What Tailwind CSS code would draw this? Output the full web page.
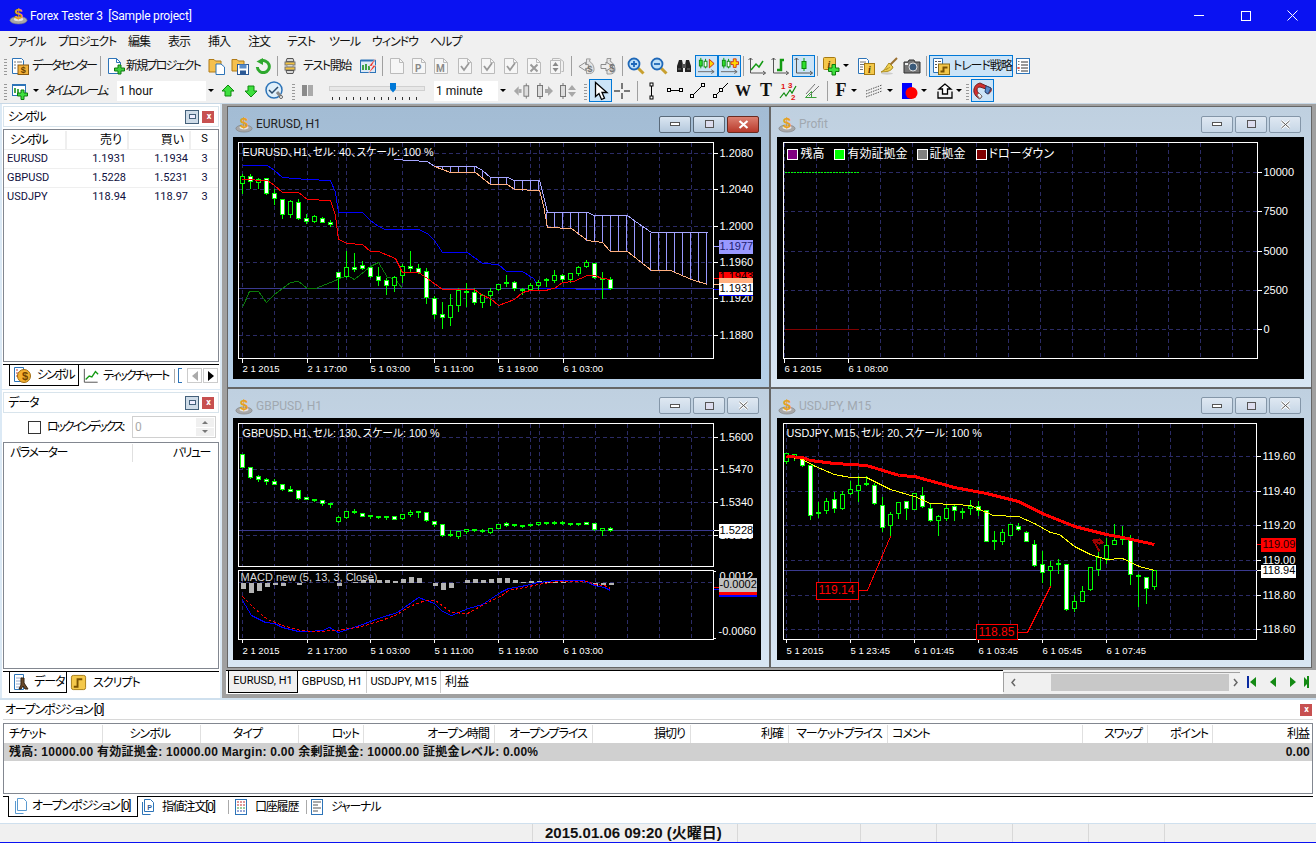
<!DOCTYPE html>
<html lang="ja">
<head>
<meta charset="UTF-8" />
<title>Forex Tester 3 [Sample project]</title>
<script src="https://cdn.jsdelivr.net/npm/@tailwindcss/browser@4"></script>
</head>
<body class="w-[1316px] h-[843px] overflow-hidden bg-[#f0f0f0] text-[12px] text-black font-['Roboto','Noto_Sans_CJK_JP',sans-serif] [font-feature-settings:'palt']">

<!-- icon sheet -->
<svg class="hidden">
  <symbol id="logo" viewBox="0 0 20 20">
    <ellipse cx="10" cy="15" rx="9" ry="4" fill="#a8a8a8" stroke="#777" stroke-width=".6"/>
    <ellipse cx="10" cy="14" rx="5" ry="2" fill="#e6e6e6"/>
    <text x="10" y="14" text-anchor="middle" font-size="16" font-weight="bold" font-family="Liberation Sans" fill="#e8a020">$</text>
  </symbol>
  <symbol id="doc-list" viewBox="0 0 18 18">
    <path d="M1.500 1.500h9l2 2v13h-11z" fill="#fff" stroke="#2d74b8"/>
    <path d="M3 5h2M3 8h2M3 11h2M6 5h5" stroke="#777"/>
    <rect x="7" y="8" width="10.500" height="9.500" fill="#f2b13a" stroke="#8a5a12"/>
    <text x="12.200" y="16" text-anchor="middle" font-size="9" font-weight="bold" font-family="Liberation Sans" fill="#6a3f00">$</text>
  </symbol>
  <symbol id="doc-plus" viewBox="0 0 18 18">
    <path d="M1.500 1.500h8l4 4v11h-12z" fill="#fff" stroke="#2d74b8"/>
    <path d="M9.500 1.500v4h4" fill="none" stroke="#2d74b8"/>
    <path d="M10 8.500h3v3h3.500v3H13v3h-3v-3H6.500v-3H10z" fill="#3fcc3f" stroke="#0e7a0e" transform="translate(1 -.5)"/>
  </symbol>
  <symbol id="folder-doc" viewBox="0 0 18 18">
    <path d="M1 4V2.500h5L7.500 4H13v11H1z" fill="#f6c04e" stroke="#b07a16"/>
    <path d="M8 7h5l3.500 3v7.500H8z" fill="#fff" stroke="#2d74b8"/>
  </symbol>
  <symbol id="folder-save" viewBox="0 0 18 18">
    <path d="M1 4V2.500h5L7.500 4H13v10H1z" fill="#f6c04e" stroke="#b07a16"/>
    <rect x="6.500" y="7.500" width="11" height="10" fill="#fff" stroke="#2d5a96"/>
    <rect x="8.500" y="7.500" width="7" height="4" fill="#5a8cc8"/>
    <rect x="9" y="13.500" width="6" height="4" fill="#2d5a96"/>
  </symbol>
  <symbol id="refresh" viewBox="0 0 16 16">
    <path d="M5.500 3.300A6 6 0 1 1 2.300 9" fill="none" stroke="#2ea82e" stroke-width="3"/>
    <path d="M8 0v7L1.500 3.500z" fill="#2ea82e"/>
  </symbol>
  <symbol id="coil" viewBox="0 0 12 18">
    <path d="M3 1.500h6l1 3H2z" fill="#d8d8d8" stroke="#555"/>
    <rect x="1" y="5" width="10" height="3" fill="#f0c040" stroke="#777"/>
    <rect x="3" y="8" width="6" height="2" fill="#fff" stroke="#777" stroke-width=".6"/>
    <rect x="1" y="10" width="10" height="3" fill="#f0c040" stroke="#777"/>
    <path d="M2 13.500h8l-1 3H3z" fill="#d8d8d8" stroke="#555"/>
  </symbol>
  <symbol id="chart-bolt" viewBox="0 0 18 18">
    <rect x="1.500" y="3.500" width="15" height="12" fill="#dce9f6" stroke="#2d74b8"/>
    <path d="M1.500 3.500h15" stroke="#2d74b8" stroke-width="2"/>
    <path d="M4 8v5M7 7v6M10 9v4" stroke="#0b8a0b" stroke-width="1.500"/>
    <path d="M17 1 10 9h4L9 17l8-8.500h-4z" fill="#e8261c" stroke="#fff" stroke-width=".4"/>
  </symbol>
  <symbol id="doc-off" viewBox="0 0 16 18">
    <path d="M1.500 1.500h9l4 4v11h-13z" fill="#f6f6f6" stroke="#bbb"/>
    <path d="M10.500 1.500v4h4" fill="none" stroke="#bbb"/>
  </symbol>
  <symbol id="doc-check" viewBox="0 0 16 18">
    <path d="M1.500 1.500h9l4 4v11h-13z" fill="#f6f6f6" stroke="#bbb"/>
    <path d="M10.500 1.500v4h4" fill="none" stroke="#bbb"/>
    <path d="M4 9l3 4 5-7" fill="none" stroke="#9a9a9a" stroke-width="1.800"/>
  </symbol>
  <symbol id="doc-x" viewBox="0 0 16 18">
    <path d="M1.500 1.500h9l4 4v11h-13z" fill="#f6f6f6" stroke="#bbb"/>
    <path d="M10.500 1.500v4h4" fill="none" stroke="#bbb"/>
    <path d="M4.500 7.500l7 7m0-7l-7 7" stroke="#9a9a9a" stroke-width="2"/>
  </symbol>
  <symbol id="doc-updown" viewBox="0 0 16 18">
    <path d="M3.500 3.500V1.500h7l4 3v10h-2" fill="none" stroke="#bbb"/>
    <path d="M1.500 3.500h10v13h-10z" fill="#f6f6f6" stroke="#bbb"/>
    <path d="M6.500 5 9.500 9h-6zM6.500 15l3-4h-6z" fill="#8a8a8a"/>
  </symbol>
  <symbol id="money-l" viewBox="0 0 18 18">
    <path d="M9 1.500h4l-1 2.500c3 1.500 5 5 5 8.500 0 3-2 4.500-5 4.500H9z" fill="#e4e4e4" stroke="#9a9a9a"/>
    <path d="M8 5 1 9.500 8 14v-2.500h3v-4H8z" fill="#eee" stroke="#8a8a8a"/>
    <text x="12.500" y="15" text-anchor="middle" font-size="10" font-weight="bold" font-family="Liberation Sans" fill="#777">$</text>
  </symbol>
  <symbol id="money-r" viewBox="0 0 18 18">
    <path d="M7 1.500h4l-1 2.500c3 1.500 5 5 5 8.500 0 3-2 4.500-5 4.500H7z" fill="#e4e4e4" stroke="#9a9a9a"/>
    <path d="M6 5l7 4.500L6 14v-2.500H1v-4h5z" fill="#eee" stroke="#8a8a8a"/>
    <text x="12" y="15" text-anchor="middle" font-size="10" font-weight="bold" font-family="Liberation Sans" fill="#777">$</text>
  </symbol>
  <symbol id="zoom-in" viewBox="0 0 18 18">
    <path d="M11 11l5.500 5.500" stroke="#c8a030" stroke-width="3"/>
    <circle cx="7" cy="7" r="5.500" fill="#bfe0f8" stroke="#1f68b8" stroke-width="1.800"/>
    <path d="M4 7h6M7 4v6" stroke="#1f68b8" stroke-width="1.800"/>
  </symbol>
  <symbol id="zoom-out" viewBox="0 0 18 18">
    <path d="M11 11l5.500 5.500" stroke="#c8a030" stroke-width="3"/>
    <circle cx="7" cy="7" r="5.500" fill="#bfe0f8" stroke="#1f68b8" stroke-width="1.800"/>
    <path d="M4 7h6" stroke="#1f68b8" stroke-width="1.800"/>
  </symbol>
  <symbol id="binoc" viewBox="0 0 16 16">
    <path d="M3 2h3l1 5v7H1V8zM13 2h-3L9 7v7h6V8z" fill="#222"/>
    <rect x="6" y="6" width="4" height="4" fill="#555"/>
    <path d="M2 11h3M11 11h3" stroke="#777"/>
  </symbol>
  <symbol id="cand-play" viewBox="0 0 20 20">
    <path d="M1 16.500h17" stroke="#666"/><path d="M15 14.500l3 2-3 2" fill="none" stroke="#666"/>
    <path d="M4 2v11M9 3v10" stroke="#0a9a0a"/>
    <rect x="2.500" y="4.500" width="3" height="6" fill="#2ee02e" stroke="#0a8a0a"/>
    <rect x="7.500" y="5.500" width="3" height="6" fill="#fff" stroke="#0a8a0a"/>
    <path d="M13 3.500l5 4.500-5 4.500z" fill="#ffd800" stroke="#d02010"/>
  </symbol>
  <symbol id="cand-plus" viewBox="0 0 20 20">
    <path d="M1 16.500h17" stroke="#666"/><path d="M15 14.500l3 2-3 2" fill="none" stroke="#666"/>
    <path d="M4 2v11M9 3v10" stroke="#0a9a0a"/>
    <rect x="2.500" y="4.500" width="3" height="6" fill="#2ee02e" stroke="#0a8a0a"/>
    <rect x="7.500" y="5.500" width="3" height="6" fill="#fff" stroke="#0a8a0a"/>
    <path d="M14 3h3v3h2.500v3H17v3h-3V9h-2.500V6H14z" fill="#ffd800" stroke="#d02010" stroke-width=".9"/>
  </symbol>
  <symbol id="ch-line" viewBox="0 0 18 18">
    <path d="M2.500 1v15h15" fill="none" stroke="#555"/><path d="M.5 3l2-2 2 2M15 14l2.500 2-2.500 2" fill="none" stroke="#555"/>
    <path d="M3 13 8 7l3 3 4-6" fill="none" stroke="#139a13" stroke-width="1.500"/>
  </symbol>
  <symbol id="ch-bar" viewBox="0 0 18 18">
    <path d="M2.500 1v15h15" fill="none" stroke="#555"/><path d="M.5 3l2-2 2 2M15 14l2.500 2-2.500 2" fill="none" stroke="#555"/>
    <path d="M6 13h4V3h3" fill="none" stroke="#139a13" stroke-width="2.500"/>
  </symbol>
  <symbol id="ch-cand" viewBox="0 0 20 18">
    <path d="M2.500 1v15h16" fill="none" stroke="#555"/><path d="M.5 3l2-2 2 2M16 14l2.500 2-2.500 2" fill="none" stroke="#555"/>
    <path d="M10 1v13" stroke="#0a9a0a"/><rect x="8" y="4.500" width="4" height="7" fill="#2ee02e" stroke="#0a8a0a"/>
  </symbol>
  <symbol id="info-plus" viewBox="0 0 19 20">
    <rect x="1.500" y="1.500" width="12" height="12" rx="1" fill="#f4c84a" stroke="#a67a12"/>
    <text x="7" y="11.500" text-anchor="middle" font-size="10" font-style="italic" font-weight="bold" font-family="Liberation Serif" fill="#5a3c00">i</text>
    <path d="M10 8.500h3.500v3.500H17v3.500h-3.500V19H10v-3.500H6.500V12H10z" fill="#3fe03f" stroke="#0e7a0e"/>
  </symbol>
  <symbol id="info-doc" viewBox="0 0 18 18">
    <path d="M1.500 1.500h8l2 2v13h-10z" fill="#fff" stroke="#2d74b8"/>
    <path d="M3 5h6M3 7.500h4M3 10h3M3 12.500h3" stroke="#777"/>
    <rect x="7.500" y="6.500" width="10" height="11" fill="#f4c84a" stroke="#a67a12"/>
    <text x="12.500" y="16" text-anchor="middle" font-size="10" font-style="italic" font-weight="bold" font-family="Liberation Serif" fill="#5a3c00">i</text>
  </symbol>
  <symbol id="broom" viewBox="0 0 18 18">
    <path d="M17 1 9 9" stroke="#9a7030" stroke-width="2"/>
    <path d="M9 6l4 4c-1 3-4 5-12 5 3-1 5-5 8-9z" fill="#f0d050" stroke="#a88a20"/>
    <path d="M3 14l5-3M6 13l4-3" stroke="#a88a20" stroke-width=".7"/>
    <ellipse cx="7" cy="16.500" rx="6" ry="1.200" fill="#ccc"/>
  </symbol>
  <symbol id="camera" viewBox="0 0 18 18">
    <path d="M1 5h4l1-2h5l1 2h5v11H1z" fill="#777" stroke="#333"/>
    <circle cx="10" cy="10" r="4" fill="#3a5a7a" stroke="#ddd"/><rect x="2" y="6" width="3" height="2" fill="#eee"/>
  </symbol>
  <symbol id="strat" viewBox="0 0 18 18">
    <path d="M1.500 1.500h9v14h-9z" fill="#fff" stroke="#2d74b8"/>
    <path d="M3 4.500h2M3 7.500h2M3 10.500h2M6 4.500h3" stroke="#555"/>
    <rect x="6.500" y="7" width="11" height="10.500" fill="#f4c84a" stroke="#8a6a12"/>
    <path d="M8.500 14.500h3v-4h4" fill="none" stroke="#7a5200" stroke-width="2"/>
  </symbol>
  <symbol id="list-x" viewBox="0 0 14 16">
    <rect x=".5" y=".5" width="13" height="15" fill="#fff" stroke="#2d74b8"/>
    <path d="M5 4h7M5 7h7M5 10h7M5 13h7" stroke="#333"/><path d="M2 3.500h1.500M2 6.500h1.500M2 12.500h1.500" stroke="#777"/>
    <path d="M1.500 9l2 2m0-2l-2 2" stroke="#d02010"/>
  </symbol>
  <symbol id="chart-plus" viewBox="0 0 18 18">
    <rect x="1.500" y="2.500" width="13" height="11" fill="#fff" stroke="#2d74b8"/>
    <path d="M1.500 3h13" stroke="#2d74b8" stroke-width="2"/>
    <path d="M4 6v5M7 7v4" stroke="#0b8a0b" stroke-width="1.500"/>
    <path d="M10 8h3v3h3.500v3H13v3.500h-3V14H6.500v-3H10z" fill="#3fe03f" stroke="#0e7a0e"/>
  </symbol>
  <symbol id="clock" viewBox="0 0 20 20">
    <circle cx="9" cy="9" r="8" fill="#dfeffa" stroke="#2d74b8" stroke-width="1.500"/>
    <path d="M4 9l3 3 6-6" fill="none" stroke="#2a4a6a" stroke-width="1.500"/>
    <path d="M12 11l5 6" stroke="#8a8a8a" stroke-width="3"/><circle cx="16" cy="16" r="1.500" fill="#fff" stroke="#666"/>
  </symbol>
  <symbol id="c-left" viewBox="0 0 20 18">
    <path d="M1 9l5-5v10z" fill="#a8a8a8"/><rect x="6" y="7" width="3" height="4" fill="#a8a8a8"/>
    <path d="M14 1v16" stroke="#777"/><rect x="11.500" y="3.500" width="5" height="11" fill="#ddd" stroke="#777"/>
  </symbol>
  <symbol id="c-right" viewBox="0 0 18 18">
    <path d="M4 1v16" stroke="#777"/><rect x="1.500" y="3.500" width="5" height="11" fill="#ddd" stroke="#777"/>
    <path d="M17 9l-5-5v10z" fill="#a8a8a8"/><rect x="9" y="7" width="3" height="4" fill="#a8a8a8"/>
  </symbol>
  <symbol id="c-ud" viewBox="0 0 18 18">
    <path d="M4 1v16" stroke="#777"/><rect x="1.500" y="3.500" width="5" height="11" fill="#ddd" stroke="#777"/>
    <path d="M13 3l4 5H9zM13 15l4-5H9z" fill="#a8a8a8"/>
  </symbol>
  <symbol id="cursor" viewBox="0 0 18 20">
    <path d="M3.500 1.500v14l3.500-3 2.500 6 3-1.300-2.500-5.700H15z" fill="#fff" stroke="#000" stroke-width="1.300"/>
  </symbol>
  <symbol id="fib" viewBox="0 0 18 18">
    <path d="M1 16l4-5 2 3 4-6 2 3 4-7" fill="none" stroke="#0b8a0b" stroke-width="1.200"/>
    <text x="2" y="7" font-size="8" font-weight="bold" font-family="Liberation Sans" fill="#e01010">1</text>
    <text x="9" y="6" font-size="8" font-weight="bold" font-family="Liberation Sans" fill="#e01010">3</text>
    <text x="12" y="17.500" font-size="8" font-weight="bold" font-family="Liberation Sans" fill="#e01010">2</text>
  </symbol>
  <symbol id="parallel" viewBox="0 0 16 16">
    <path d="M1.500 14.500h11M1.500 14.500l6-6v6" fill="none" stroke="#3aa03a"/>
    <path d="M2 11l9-10M5 13l10-10" stroke="#777"/>
  </symbol>
  <symbol id="lines" viewBox="0 0 18 14">
    <path d="M1 7 17 1M1 10 17 4M1 13 17 7" stroke="#555" stroke-dasharray="1.500 1"/>
  </symbol>
  <symbol id="color" viewBox="0 0 16 16">
    <rect width="10" height="16" fill="#0000ff"/><circle cx="9.500" cy="10" r="6" fill="#ff0000"/>
  </symbol>
  <symbol id="export" viewBox="0 0 18 16">
    <path d="M9 1 3 6h3.500v5h5V6H15z" fill="#fff" stroke="#000" stroke-width="1.300"/>
    <path d="M2 8.500v6.500h14V8.500" fill="none" stroke="#000" stroke-width="1.300"/>
  </symbol>
  <symbol id="magnet" viewBox="0 0 20 20">
    <path d="M7 2 18 7c1 3-1 5-3 6L12 11c1-1 2-2 1-3L7 6c-2 0-3 1-3 3s3 5 5 6l-2 3C3 16 0 12 1 8s3-5 6-6z" fill="#d03030" stroke="#702020"/>
    <path d="M13 5l5 2-3 6-3-2z" fill="#5a8ccc" stroke="#274a7a"/>
    <path d="M4 14l3 4 2-3-3-3z" fill="#eee" stroke="#777"/>
  </symbol>
  <symbol id="tick" viewBox="0 0 18 18">
    <path d="M1.500 1v15h15" fill="none" stroke="#444"/><path d="M3 13l4-4 3 1 4-6 3 3" fill="none" stroke="#139a13" stroke-width="1.500"/>
  </symbol>
  <symbol id="coins" viewBox="0 0 18 18">
    <path d="M1.500 1.500h9v14h-9z" fill="#fff" stroke="#2d74b8"/>
    <path d="M3 4h2M3 7h2M3 10h2" stroke="#c04040"/>
    <circle cx="11" cy="10" r="6.500" fill="#f4b030" stroke="#a06a10"/>
    <text x="11" y="14" text-anchor="middle" font-size="11" font-weight="bold" font-family="Liberation Sans" fill="#704400">$</text>
  </symbol>
  <symbol id="data-i" viewBox="0 0 18 18">
    <path d="M1.500 1.500h9v15h-9z" fill="#fff" stroke="#2d74b8"/>
    <path d="M3 5h6M3 8h6M3 11h6M3 14h6" stroke="#9ac"/>
    <path d="M8 5h3v5l4 6h-3l-2-3-2 3H6l2-4z" fill="#6a4a2a" stroke="#321"/>
  </symbol>
  <symbol id="script-i" viewBox="0 0 18 18">
    <rect x="1.500" y="1.500" width="15" height="15" rx="2" fill="#f4c84a" stroke="#a67a12"/>
    <path d="M4 13.500h4v-8h5" fill="none" stroke="#7a5200" stroke-width="2"/>
  </symbol>
  <symbol id="doc2" viewBox="0 0 14 18">
    <path d="M3.500 1.500h6l3 3v9h-9z" fill="#fff" stroke="#5a9ad0"/>
    <path d="M1.500 4v12.500h8" fill="none" stroke="#5a9ad0"/>
  </symbol>
  <symbol id="doc-p" viewBox="0 0 14 18">
    <path d="M3.500 1.500h6l3 3v9h-9z" fill="#fff" stroke="#2d74b8"/>
    <path d="M1.500 4v12.500h8" fill="none" stroke="#2d74b8"/>
    <text x="8" y="11.500" text-anchor="middle" font-size="7" font-weight="bold" font-family="Liberation Sans" fill="#2d5a96">P</text>
  </symbol>
  <symbol id="grid-i" viewBox="0 0 14 18">
    <rect x="1.500" y="1.500" width="11" height="15" fill="#fff" stroke="#2d74b8"/>
    <path d="M3 4h8M3 7h8" stroke="#c03030"/><path d="M3 10h8" stroke="#3a9a3a"/><path d="M3 13h8" stroke="#3050b0"/>
    <path d="M5.500 3v11M8.500 3v11" stroke="#fff"/>
  </symbol>
  <symbol id="journal-i" viewBox="0 0 14 18">
    <rect x="1.500" y="1.500" width="11" height="15" fill="#fff" stroke="#2d74b8"/>
    <path d="M3 4h8M3 7h5M3 10h8M3 13h5" stroke="#555"/>
  </symbol>
</svg>

<!-- タイトルバー -->
<div class="h-[31px] bg-[#0a12f2] flex items-center text-white">
  <svg class="w-[19px] h-[19px] ml-[9px]"><use href="#logo"/></svg>
  <span class="ml-[2px] whitespace-pre tracking-[-.2px]">Forex Tester 3  [Sample project]</span>
  <div class="ml-auto flex h-full">
    <div class="w-[47px] flex items-center justify-center"><div class="w-[10px] h-px bg-white"></div></div>
    <div class="w-[47px] flex items-center justify-center"><div class="w-[10px] h-[10px] border border-white"></div></div>
    <div class="w-[47px] flex items-center justify-center">
      <svg class="w-[11px] h-[11px]" viewBox="0 0 11 11"><path d="M.5.5l10 10m0-10l-10 10" stroke="#fff"/></svg>
    </div>
  </div>
</div>

<!-- メニュー -->
<div class="h-[22px] flex items-center pl-[8px] text-[#111] whitespace-nowrap tracking-[-1px]">
  <span class="w-[50px]">ファイル</span><span class="w-[70px]">プロジェクト</span><span class="w-[40px]">編集</span><span class="w-[40px]">表示</span><span class="w-[40px]">挿入</span><span class="w-[39px]">注文</span><span class="w-[42px]">テスト</span><span class="w-[43px]">ツール</span><span class="w-[58px]">ウィンドウ</span><span>ヘルプ</span>
</div>

<!-- ツールバー1 -->
<div class="h-[25px] flex items-center pl-[4px] text-[#111]">
  <div class="w-[3px] h-[18px] bg-[repeating-linear-gradient(0deg,#999_0,#999_1px,transparent_1px,transparent_3px)]"></div>
  <svg class="w-[18px] h-[18px] ml-[4px]"><use href="#doc-list"/></svg>
  <span class="ml-[3px] w-[62px] whitespace-nowrap tracking-[-2px]">データセンター</span>
  <div class="ml-[6px] w-px h-[20px] bg-[#a0a0a0]"></div>
  <svg class="w-[18px] h-[18px] ml-[6px]"><use href="#doc-plus"/></svg>
  <span class="ml-[1px] w-[76px] whitespace-nowrap tracking-[-1.8px]">新規プロジェクト</span>
  <svg class="w-[18px] h-[18px] ml-[6px]"><use href="#folder-doc"/></svg>
  <svg class="w-[18px] h-[18px] ml-[5px]"><use href="#folder-save"/></svg>
  <svg class="w-[16px] h-[16px] ml-[6px]"><use href="#refresh"/></svg>
  <div class="ml-[6px] w-px h-[20px] bg-[#a0a0a0]"></div>
  <svg class="w-[12px] h-[18px] ml-[6px]"><use href="#coil"/></svg>
  <span class="ml-[7px] w-[49px] whitespace-nowrap tracking-[-1.4px]">テスト開始</span>
  <svg class="w-[18px] h-[18px] ml-[7px]"><use href="#chart-bolt"/></svg>
  <div class="ml-[5px] w-px h-[20px] bg-[#a0a0a0]"></div>
  <svg class="w-[16px] h-[18px] ml-[6px]"><use href="#doc-off"/></svg>
  <div class="relative ml-[6px] w-[16px] h-[18px]"><svg class="w-[16px] h-[18px]"><use href="#doc-off"/></svg><span class="absolute left-[4px] top-[4px] text-[10px] font-bold text-[#8a8a8a]">P</span></div>
  <div class="relative ml-[6px] w-[16px] h-[18px]"><svg class="w-[16px] h-[18px]"><use href="#doc-off"/></svg><span class="absolute left-[3px] top-[4px] text-[10px] font-bold text-[#8a8a8a]">M</span></div>
  <svg class="w-[16px] h-[18px] ml-[8px]"><use href="#doc-check"/></svg>
  <svg class="w-[16px] h-[18px] ml-[7px]"><use href="#doc-check"/></svg>
  <svg class="w-[16px] h-[18px] ml-[7px]"><use href="#doc-check"/></svg>
  <svg class="w-[16px] h-[18px] ml-[7px]"><use href="#doc-x"/></svg>
  <svg class="w-[16px] h-[18px] ml-[7px]"><use href="#doc-updown"/></svg>
  <div class="ml-[6px] w-px h-[20px] bg-[#a0a0a0]"></div>
  <svg class="w-[17px] h-[18px] ml-[6px]"><use href="#money-l"/></svg>
  <svg class="w-[18px] h-[18px] ml-[5px]"><use href="#money-r"/></svg>
  <div class="ml-[4px] w-px h-[20px] bg-[#a0a0a0]"></div>
  <svg class="w-[18px] h-[18px] ml-[4px]"><use href="#zoom-in"/></svg>
  <svg class="w-[18px] h-[18px] ml-[5px]"><use href="#zoom-out"/></svg>
  <svg class="w-[16px] h-[16px] ml-[8px]"><use href="#binoc"/></svg>
  <div class="ml-[3px] w-[23px] h-[22px] flex items-center justify-center border border-[#0078d7] bg-[#cce4f7]"><svg class="w-[19px] h-[19px]"><use href="#cand-play"/></svg></div>
  <div class="w-[23px] h-[22px] flex items-center justify-center border border-[#0078d7] bg-[#cce4f7]"><svg class="w-[19px] h-[19px]"><use href="#cand-plus"/></svg></div>
  <div class="ml-[2px] w-px h-[20px] bg-[#a0a0a0]"></div>
  <svg class="w-[18px] h-[18px] ml-[4px]"><use href="#ch-line"/></svg>
  <svg class="w-[18px] h-[18px] ml-[5px]"><use href="#ch-bar"/></svg>
  <div class="ml-[3px] w-[23px] h-[22px] flex items-center justify-center border border-[#0078d7] bg-[#cce4f7]"><svg class="w-[20px] h-[18px]"><use href="#ch-cand"/></svg></div>
  <div class="ml-[2px] w-px h-[20px] bg-[#a0a0a0]"></div>
  <svg class="w-[19px] h-[20px] ml-[4px]"><use href="#info-plus"/></svg>
  <div class="ml-[2px] border-x-[3px] border-t-[3px] border-x-transparent border-t-black"></div>
  <svg class="w-[18px] h-[18px] ml-[8px]"><use href="#info-doc"/></svg>
  <svg class="w-[18px] h-[18px] ml-[5px]"><use href="#broom"/></svg>
  <svg class="w-[18px] h-[18px] ml-[5px]"><use href="#camera"/></svg>
  <div class="ml-[5px] w-px h-[20px] bg-[#a0a0a0]"></div>
  <div class="ml-[2px] w-[84px] h-[22px] flex items-center border border-[#0078d7] bg-[#cce4f7]"><svg class="w-[18px] h-[18px] ml-[2px]"><use href="#strat"/></svg><span class="ml-[3px] whitespace-nowrap tracking-[-1.1px]">トレード戦略</span></div>
  <svg class="w-[14px] h-[16px] ml-[3px]"><use href="#list-x"/></svg>
</div>

<!-- ツールバー2 -->
<div class="h-[25px] flex items-center pl-[4px] text-[#111]">
  <div class="w-[3px] h-[18px] bg-[repeating-linear-gradient(0deg,#999_0,#999_1px,transparent_1px,transparent_3px)]"></div>
  <svg class="w-[18px] h-[18px] ml-[4px]"><use href="#chart-plus"/></svg>
  <div class="ml-[4px] border-x-[3px] border-t-[3px] border-x-transparent border-t-black"></div>
  <span class="ml-[6px] w-[65px] whitespace-nowrap tracking-[-1.9px]">タイムフレーム:</span>
  <div class="ml-[7px] w-[99px] h-[20px] bg-white flex items-center pl-[2px]">1 hour
    <div class="ml-auto w-[10px] h-full bg-[#f0f0f0] flex items-center justify-center"><div class="border-x-[3px] border-t-[3px] border-x-transparent border-t-black"></div></div>
  </div>
  <svg class="w-[14px] h-[14px] ml-[5px]" viewBox="0 0 14 14"><path d="M7 1l6 6H10v5H4V7H1z" fill="#3ee03e" stroke="#0e8a0e"/></svg>
  <svg class="w-[14px] h-[14px] ml-[9px]" viewBox="0 0 14 14"><path d="M7 13 1 7h3V2h6v5h3z" fill="#3ee03e" stroke="#0e8a0e"/></svg>
  <svg class="w-[20px] h-[20px] ml-[7px]"><use href="#clock"/></svg>
  <div class="ml-[7px] w-[3px] h-[18px] bg-[repeating-linear-gradient(0deg,#999_0,#999_1px,transparent_1px,transparent_3px)]"></div>
  <div class="ml-[7px] w-[11px] h-[11px] flex gap-[1px]"><div class="w-[5px] bg-[#8a8a8a]"></div><div class="w-[5px] bg-[#aaa]"></div></div>
  <div class="relative ml-[16px] w-[96px] h-[20px]">
    <div class="absolute left-0 right-0 top-[5px] h-[5px] bg-[#e7e7e7] border border-[#d0d0d0]"></div>
    <div class="absolute left-[61px] top-[2px] w-[6px] h-[10px] bg-[#0078d7] [clip-path:polygon(0_0,100%_0,100%_65%,50%_100%,0_65%)]"></div>
    <div class="absolute left-[3px] right-[3px] top-[16px] h-[3px] bg-[repeating-linear-gradient(90deg,#333_0,#333_1px,transparent_1px,transparent_7px)]"></div>
  </div>
  <div class="ml-[9px] w-[74px] h-[20px] bg-white flex items-center pl-[2px]">1 minute
    <div class="ml-auto w-[10px] h-full bg-[#f0f0f0] flex items-center justify-center"><div class="border-x-[3px] border-t-[3px] border-x-transparent border-t-black"></div></div>
  </div>
  <svg class="w-[19px] h-[18px] ml-[5px]"><use href="#c-left"/></svg>
  <svg class="w-[18px] h-[18px] ml-[4px]"><use href="#c-right"/></svg>
  <svg class="w-[18px] h-[18px] ml-[5px]"><use href="#c-ud"/></svg>
  <div class="ml-[7px] w-[3px] h-[18px] bg-[repeating-linear-gradient(0deg,#999_0,#999_1px,transparent_1px,transparent_3px)]"></div>
  <div class="ml-[2px] w-[23px] h-[23px] flex items-center justify-center border border-[#0078d7] bg-[#cce4f7]"><svg class="w-[18px] h-[20px]"><use href="#cursor"/></svg></div>
  <svg class="w-[16px] h-[16px] ml-[2px]" viewBox="0 0 16 16"><path d="M0 8h6M10 8h6M8 0v6M8 10v6" stroke="#000"/></svg>
  <div class="ml-[7px] w-px h-[20px] bg-[#a0a0a0]"></div>
  <svg class="w-[5px] h-[18px] ml-[11px]" viewBox="0 0 5 18"><path d="M2.500 3v12" stroke="#000"/><rect x="1" y="1" width="3" height="3" fill="#fff" stroke="#000"/><rect x="1" y="14" width="3" height="3" fill="#fff" stroke="#000"/></svg>
  <svg class="w-[16px] h-[5px] ml-[13px]" viewBox="0 0 16 5"><path d="M3 2.500h10" stroke="#000"/><rect x=".5" y=".5" width="3" height="3" fill="#fff" stroke="#000"/><rect x="12.500" y=".5" width="3" height="3" fill="#fff" stroke="#000"/></svg>
  <svg class="w-[15px] h-[15px] ml-[7px]" viewBox="0 0 15 15"><path d="M2 13 13 2" stroke="#000"/><rect x=".5" y="11.500" width="3" height="3" fill="#fff" stroke="#000"/><rect x="11.500" y=".5" width="3" height="3" fill="#fff" stroke="#000"/></svg>
  <svg class="w-[15px] h-[15px] ml-[8px]" viewBox="0 0 15 15"><path d="M2 13 15 0" stroke="#000"/><rect x=".5" y="11.500" width="3" height="3" fill="#fff" stroke="#000"/><rect x="6.500" y="5.500" width="3" height="3" fill="#fff" stroke="#000"/></svg>
  <span class="ml-[7px] w-[16px] text-center text-[16px] font-bold font-['Liberation_Serif']">W</span>
  <span class="ml-[9px] w-[12px] text-center text-[18px] font-bold font-['Liberation_Serif']">T</span>
  <svg class="w-[18px] h-[18px] ml-[7px]"><use href="#fib"/></svg>
  <svg class="w-[16px] h-[16px] ml-[7px]"><use href="#parallel"/></svg>
  <div class="ml-[7px] w-px h-[20px] bg-[#a0a0a0]"></div>
  <span class="ml-[7px] w-[12px] text-center text-[18px] font-bold font-['Liberation_Serif']">F</span>
  <div class="ml-[4px] border-x-[3px] border-t-[3px] border-x-transparent border-t-black"></div>
  <svg class="w-[18px] h-[14px] ml-[8px]"><use href="#lines"/></svg>
  <div class="ml-[4px] border-x-[3px] border-t-[3px] border-x-transparent border-t-black"></div>
  <svg class="w-[16px] h-[16px] ml-[9px]"><use href="#color"/></svg>
  <div class="ml-[3px] border-x-[3px] border-t-[3px] border-x-transparent border-t-black"></div>
  <svg class="w-[18px] h-[16px] ml-[9px]"><use href="#export"/></svg>
  <div class="ml-[2px] border-x-[3px] border-t-[3px] border-x-transparent border-t-black"></div>
  <div class="ml-[4px] w-[3px] h-[18px] bg-[repeating-linear-gradient(0deg,#999_0,#999_1px,transparent_1px,transparent_3px)]"></div>
  <div class="ml-[2px] w-[23px] h-[23px] flex items-center justify-center border border-[#0078d7] bg-[#cce4f7]"><svg class="w-[20px] h-[20px]"><use href="#magnet"/></svg></div>
</div>

<!-- メイン -->
<div class="h-[595px] flex border-t border-[#c8d8e6]">
  <!-- 左パネル -->
  <div class="w-[222px] shrink-0 bg-[#dbe9f5] flex flex-col">
    <div class="h-[285px] mx-[2px] bg-white flex flex-col pt-[2px]">
      <div class="h-[21px] mx-px flex items-center pl-[4px] border border-[#d8e4ec] tracking-[-2px]">シンボル
        <div class="ml-auto w-[14px] h-[14px] border border-[#44607a] bg-[#cfdce8] flex items-center justify-center"><div class="w-[7px] h-[5px] border border-[#44607a] bg-[#eef]"></div></div>
        <div class="ml-[3px] mr-[4px] w-[12px] h-[12px] bg-[#c75050] text-white text-[9px] font-bold flex items-center justify-center">x</div>
      </div>
      <div class="mt-[2px] mx-px h-[233px] border border-[#828790] flex flex-col">
        <div class="h-[20px] flex items-center border-b border-[#efefef]"><span class="w-[63px] pl-[6px] border-r-2 border-[#efefef] tracking-[-2px]">シンボル</span><span class="w-[62px] pr-[5px] text-right border-r-2 border-[#efefef]">売り</span><span class="w-[62px] pr-[5px] text-right border-r-2 border-[#efefef]">買い</span><span class="flex-1 text-center text-[11px]">S</span></div>
        <div class="h-[19px] flex items-center border-b border-[#efefef] text-[11px] text-[#101040]"><span class="w-[63px] pl-[3px]">EURUSD</span><span class="w-[62px] pr-[3px] text-right">1.1931</span><span class="w-[62px] pr-[3px] text-right">1.1934</span><span class="flex-1 text-center">3</span></div>
        <div class="h-[19px] flex items-center border-b border-[#efefef] text-[11px] text-[#101040]"><span class="w-[63px] pl-[3px]">GBPUSD</span><span class="w-[62px] pr-[3px] text-right">1.5228</span><span class="w-[62px] pr-[3px] text-right">1.5231</span><span class="flex-1 text-center">3</span></div>
        <div class="h-[18px] flex items-center text-[11px] text-[#101040]"><span class="w-[63px] pl-[3px]">USDJPY</span><span class="w-[62px] pr-[3px] text-right">118.94</span><span class="w-[62px] pr-[3px] text-right">118.97</span><span class="flex-1 text-center">3</span></div>
      </div>
      <div class="mt-[2px] mx-px h-[22px] border-t border-black flex items-center whitespace-nowrap tracking-[-2px]">
        <div class="ml-[6px] w-[70px] h-[21px] -mt-px border-x border-b border-black flex items-center pl-[3px]"><svg class="w-[18px] h-[18px]"><use href="#coins"/></svg><span class="ml-[6px]">シンボル</span></div>
        <svg class="w-[16px] h-[16px] ml-[4px]"><use href="#tick"/></svg>
        <span class="ml-[4px] w-[68px]">ティックチャート</span>
        <div class="w-px h-[14px] bg-[#aaa] ml-[3px]"></div>
        <div class="ml-[3px] w-[4px] h-[15px] border-l border-y border-[#2d74b8]"></div>
        <div class="ml-[5px] w-[15px] h-[15px] border border-[#ccc] flex items-center justify-center"><div class="border-y-[5px] border-r-[6px] border-y-transparent border-r-[#aaa]"></div></div>
        <div class="ml-px w-[15px] h-[15px] border border-[#ccc] flex items-center justify-center"><div class="border-y-[5px] border-l-[6px] border-y-transparent border-l-black"></div></div>
      </div>
    </div>
    <div class="mt-px flex-1 mx-[2px] bg-white flex flex-col pt-[2px]">
      <div class="h-[21px] mx-px flex items-center pl-[4px] border border-[#d8e4ec] tracking-[-1px]">データ
        <div class="ml-auto w-[14px] h-[14px] border border-[#44607a] bg-[#cfdce8] flex items-center justify-center"><div class="w-[7px] h-[5px] border border-[#44607a] bg-[#eef]"></div></div>
        <div class="ml-[3px] mr-[4px] w-[12px] h-[12px] bg-[#c75050] text-white text-[9px] font-bold flex items-center justify-center">x</div>
      </div>
      <div class="h-[28px] flex items-center">
        <div class="ml-[26px] w-[13px] h-[13px] border border-[#333] bg-white"></div>
        <span class="ml-[6px] w-[80px] whitespace-nowrap tracking-[-2.2px]">ロックインデックス:</span>
        <div class="ml-[5px] w-[84px] h-[22px] border border-[#d0d0d0] flex items-center pl-[2px] text-[#aaa]">0
          <div class="ml-auto w-[18px] mr-px flex flex-col gap-px h-[18px]">
            <div class="flex-1 bg-[#f0f0f0] flex items-center justify-center"><div class="border-x-[3px] border-b-[3px] border-x-transparent border-b-[#777]"></div></div>
            <div class="flex-1 bg-[#f0f0f0] flex items-center justify-center"><div class="border-x-[3px] border-t-[3px] border-x-transparent border-t-[#777]"></div></div>
          </div>
        </div>
      </div>
      <div class="mx-px h-[227px] mt-px border border-[#828790]">
        <div class="h-[19px] flex items-center tracking-[-1.5px]"><span class="w-[129px] pl-[6px] border-r border-[#e0e0e0]">パラメーター</span><span class="w-[79px] pr-[2px] text-right">バリュー</span></div>
      </div>
      <div class="mt-[2px] mx-px h-[22px] border-t border-black flex items-center whitespace-nowrap tracking-[-1px]">
        <div class="ml-[6px] w-[58px] h-[21px] -mt-px border-x border-b border-black flex items-center pl-[3px]"><svg class="w-[18px] h-[18px]"><use href="#data-i"/></svg><span class="ml-[3px]">データ</span></div>
        <svg class="w-[17px] h-[17px] ml-[3px]"><use href="#script-i"/></svg>
        <span class="ml-[6px]">スクリプト</span>
      </div>
    </div>
  </div>

  <!-- MDI領域 -->
  <div class="flex-1 bg-[#a0a0a0] flex flex-col pl-[5px]">
    <div class="h-[2px]"></div>
    <div class="grid grid-cols-[543px_542px] grid-rows-[282px_280px]">
      <!-- EURUSD -->
      <div class="border border-[#666] bg-[linear-gradient(#a3bcd4,#b6d0e8)] flex flex-col">
        <div class="h-[30px] flex items-center pl-[7px] pt-[4px] text-[#222]">
          <svg class="w-[18px] h-[18px]"><use href="#logo"/></svg><span class="ml-[3px]">EURUSD, H1</span>
          <div class="ml-auto flex gap-[2px] mr-[10px]">
            <div class="w-[32px] h-[17px] border border-[#5a6a7a] rounded-[2px] bg-[linear-gradient(#dbe6f2,#b4c8dc)] flex items-center justify-center"><div class="w-[10px] h-[4px] bg-white border border-[#555]"></div></div>
            <div class="w-[32px] h-[17px] border border-[#5a6a7a] rounded-[2px] bg-[linear-gradient(#dbe6f2,#b4c8dc)] flex items-center justify-center"><div class="w-[9px] h-[8px] bg-[#dde] border border-[#555]"></div></div>
            <div class="w-[32px] h-[17px] border border-[#6a2a20] rounded-[2px] bg-[linear-gradient(#dc8070,#b83a2c)] flex items-center justify-center"><svg class="w-[11px] h-[9px]" viewBox="0 0 11 9"><path d="M1.500 1l8 7m0-7l-8 7" stroke="#fff" stroke-width="2.200"/></svg></div>
          </div>
        </div>
        <svg id="eur" class="ml-[5px] w-[528px] h-[242px] bg-black" viewBox="233 137 528 242" shape-rendering="crispEdges" font-family="Liberation Sans, Noto Sans CJK JP, sans-serif" font-size="11"></svg>
      </div>
      <!-- Profit -->
      <div class="border border-[#666] bg-[linear-gradient(#bfd0e0,#d8e6f3)] flex flex-col">
        <div class="h-[30px] flex items-center pl-[7px] pt-[4px] text-[#a0a8b0]">
          <svg class="w-[18px] h-[18px]"><use href="#logo"/></svg><span class="ml-[3px]">Profit</span>
          <div class="ml-auto flex gap-[2px] mr-[10px]">
            <div class="w-[32px] h-[17px] border border-[#8496a8] rounded-[2px] bg-[linear-gradient(#dfe8f2,#c6d6e6)] flex items-center justify-center"><div class="w-[10px] h-[4px] bg-white border border-[#555]"></div></div>
            <div class="w-[32px] h-[17px] border border-[#8496a8] rounded-[2px] bg-[linear-gradient(#dfe8f2,#c6d6e6)] flex items-center justify-center"><div class="w-[9px] h-[8px] bg-[#dde] border border-[#555]"></div></div>
            <div class="w-[32px] h-[17px] border border-[#8496a8] rounded-[2px] bg-[linear-gradient(#dfe8f2,#c6d6e6)] flex items-center justify-center"><svg class="w-[11px] h-[9px]" viewBox="0 0 11 9"><path d="M1.500 1l8 7m0-7l-8 7" stroke="#fff" stroke-width="2.800"/><path d="M1.500 1l8 7m0-7l-8 7" stroke="#555" stroke-width="1"/></svg></div>
          </div>
        </div>
        <svg id="profit" class="ml-[6px] w-[527px] h-[242px] bg-black" viewBox="777 137 527 242" shape-rendering="crispEdges" font-family="Liberation Sans, Noto Sans CJK JP, sans-serif" font-size="11"></svg>
      </div>
      <!-- GBPUSD -->
      <div class="border border-[#666] bg-[linear-gradient(#bfd0e0,#d8e6f3)] flex flex-col">
        <div class="h-[29px] flex items-center pl-[7px] pt-[4px] text-[#a0a8b0]">
          <svg class="w-[18px] h-[18px]"><use href="#logo"/></svg><span class="ml-[3px]">GBPUSD, H1</span>
          <div class="ml-auto flex gap-[2px] mr-[10px]">
            <div class="w-[32px] h-[17px] border border-[#8496a8] rounded-[2px] bg-[linear-gradient(#dfe8f2,#c6d6e6)] flex items-center justify-center"><div class="w-[10px] h-[4px] bg-white border border-[#555]"></div></div>
            <div class="w-[32px] h-[17px] border border-[#8496a8] rounded-[2px] bg-[linear-gradient(#dfe8f2,#c6d6e6)] flex items-center justify-center"><div class="w-[9px] h-[8px] bg-[#dde] border border-[#555]"></div></div>
            <div class="w-[32px] h-[17px] border border-[#8496a8] rounded-[2px] bg-[linear-gradient(#dfe8f2,#c6d6e6)] flex items-center justify-center"><svg class="w-[11px] h-[9px]" viewBox="0 0 11 9"><path d="M1.500 1l8 7m0-7l-8 7" stroke="#fff" stroke-width="2.800"/><path d="M1.500 1l8 7m0-7l-8 7" stroke="#555" stroke-width="1"/></svg></div>
          </div>
        </div>
        <svg id="gbp" class="ml-[5px] w-[528px] h-[242px] bg-black" viewBox="233 418 528 242" shape-rendering="crispEdges" font-family="Liberation Sans, Noto Sans CJK JP, sans-serif" font-size="11"></svg>
      </div>
      <!-- USDJPY -->
      <div class="border border-[#666] bg-[linear-gradient(#bfd0e0,#d8e6f3)] flex flex-col">
        <div class="h-[29px] flex items-center pl-[7px] pt-[4px] text-[#a0a8b0]">
          <svg class="w-[18px] h-[18px]"><use href="#logo"/></svg><span class="ml-[3px]">USDJPY, M15</span>
          <div class="ml-auto flex gap-[2px] mr-[10px]">
            <div class="w-[32px] h-[17px] border border-[#8496a8] rounded-[2px] bg-[linear-gradient(#dfe8f2,#c6d6e6)] flex items-center justify-center"><div class="w-[10px] h-[4px] bg-white border border-[#555]"></div></div>
            <div class="w-[32px] h-[17px] border border-[#8496a8] rounded-[2px] bg-[linear-gradient(#dfe8f2,#c6d6e6)] flex items-center justify-center"><div class="w-[9px] h-[8px] bg-[#dde] border border-[#555]"></div></div>
            <div class="w-[32px] h-[17px] border border-[#8496a8] rounded-[2px] bg-[linear-gradient(#dfe8f2,#c6d6e6)] flex items-center justify-center"><svg class="w-[11px] h-[9px]" viewBox="0 0 11 9"><path d="M1.500 1l8 7m0-7l-8 7" stroke="#fff" stroke-width="2.800"/><path d="M1.500 1l8 7m0-7l-8 7" stroke="#555" stroke-width="1"/></svg></div>
          </div>
        </div>
        <svg id="usd" class="ml-[6px] w-[527px] h-[242px] bg-black" viewBox="777 418 527 242" shape-rendering="crispEdges" font-family="Liberation Sans, Noto Sans CJK JP, sans-serif" font-size="11"></svg>
      </div>
    </div>
    <div class="h-[2px]"></div>
    <!-- ウィンドウタブ -->
    <div class="h-[24px] -ml-[1px] pl-[2px] flex bg-white border-t border-black text-[11px] whitespace-nowrap">
      <div class="w-[70px] h-[22px] flex items-center justify-center bg-[#f0f0f0] border-x border-b border-black">EURUSD, H1</div>
      <div class="w-[69px] h-[22px] flex items-center justify-center border-r border-[#ccc]">GBPUSD, H1</div>
      <div class="w-[74px] h-[22px] flex items-center justify-center border-r border-[#ccc]">USDJPY, M15</div>
      <div class="pl-[4px] h-[22px] flex items-center text-[12px]">利益</div>
      <div class="ml-auto w-[313px] -mt-px bg-[#f0f0f0] flex items-center">
        <div class="w-[237px] h-[20px] border-l border-t border-[#a0a0a0] flex items-center">
          <svg class="ml-[6px] w-[6px] h-[9px]" viewBox="0 0 6 9"><path d="M5 1 2 4.500 5 8" fill="none" stroke="#666" stroke-width="1.500"/></svg>
          <div class="ml-[35px] w-[178px] h-[17px] bg-[#c8c8c8]"></div>
          <svg class="ml-[4px] w-[6px] h-[9px]" viewBox="0 0 6 9"><path d="M1 1l3 3.500L1 8" fill="none" stroke="#666" stroke-width="1.500"/></svg>
        </div>
        <svg class="ml-[7px] w-[62px] h-[12px]" viewBox="0 0 62 12"><path d="M0 0h2v12H0z" fill="#0a2aa0"/><path d="M3 6l6-5v10zM23 6l6-5v10z" fill="#148a14"/><path d="M43 1l6 5-6 5zM57 1l5 5-5 5z" fill="#148a14"/><path d="M60 0h2v12h-2z" fill="#148a14"/></svg>
      </div>
    </div>
  </div>
</div>

<!-- オープンポジション -->
<div class="h-[125px] bg-white border-t-2 border-[#cfe0ee] flex flex-col relative">
  <div class="h-[20px] mx-[3px] flex items-center pl-[2px] border-b border-[#d8d8d8] tracking-[-1.2px]">オープンポジション [0]
    <div class="ml-auto mr-[1px] w-[12px] h-[12px] bg-[#c75050] text-white text-[9px] font-bold flex items-center justify-center">x</div>
  </div>
  <div class="mt-[3px] mx-[3px] h-[71px] border border-[#828790] flex flex-col">
    <div class="h-[19px] flex items-center shrink-0 whitespace-nowrap tracking-[-1px]">
      <span class="w-[99px] pl-[5px] border-r border-[#e0e0e0]">チケット</span>
      <span class="w-[98px] pr-[30px] text-right border-r border-[#e0e0e0]">シンボル</span>
      <span class="w-[98px] pr-[36px] text-right border-r border-[#e0e0e0]">タイプ</span>
      <span class="w-[65px] pr-[4px] text-right border-r border-[#e0e0e0]">ロット</span>
      <span class="w-[131px] pr-[5px] text-right border-r border-[#e0e0e0]">オープン時間</span>
      <span class="w-[98px] pr-[5px] text-right border-r border-[#e0e0e0]">オープンプライス</span>
      <span class="w-[98px] pr-[5px] text-right border-r border-[#e0e0e0]">損切り</span>
      <span class="w-[98px] pr-[5px] text-right border-r border-[#e0e0e0]">利確</span>
      <span class="w-[99px] pr-[5px] text-right border-r border-[#e0e0e0]">マーケットプライス</span>
      <span class="w-[195px] pl-[4px] border-r border-[#e0e0e0]">コメント</span>
      <span class="w-[65px] pr-[5px] text-right border-r border-[#e0e0e0]">スワップ</span>
      <span class="w-[65px] pr-[4px] text-right border-r border-[#e0e0e0]">ポイント</span>
      <span class="flex-1 pr-[3px] text-right">利益</span>
    </div>
    <div class="h-[18px] bg-[#d0d0d0] flex items-center pl-[5px] pr-[2px] font-bold text-[#111] font-['Liberation_Sans','Noto_Sans_CJK_JP',sans-serif] tracking-[.25px] whitespace-nowrap">残高: 10000.00 有効証拠金: 10000.00 Margin: 0.00 余剰証拠金: 10000.00 証拠金レベル: 0.00%<span class="ml-auto">0.00</span></div>
  </div>
  <div class="mt-[2px] mx-[3px] h-[21px] border-t border-black flex items-center whitespace-nowrap tracking-[-1.2px]">
    <div class="ml-[5px] w-[130px] h-[21px] -mt-px bg-white border-x border-b border-black flex items-center pl-[3px]"><svg class="w-[14px] h-[18px] ml-[2px]"><use href="#doc2"/></svg><span class="ml-[4px]">オープンポジション [0]</span></div>
    <svg class="w-[14px] h-[18px] ml-[3px]"><use href="#doc-p"/></svg>
    <span class="ml-[7px] w-[60px]">指値注文[0]</span>
    <div class="ml-[6px] w-px h-[14px] bg-[#aaa]"></div>
    <svg class="w-[14px] h-[18px] ml-[5px]"><use href="#grid-i"/></svg>
    <span class="ml-[7px] w-[48px]">口座履歴</span>
    <div class="ml-[3px] w-px h-[14px] bg-[#aaa]"></div>
    <svg class="w-[14px] h-[18px] ml-[3px]"><use href="#journal-i"/></svg>
    <span class="ml-[7px]">ジャーナル</span>
  </div>
</div>

<!-- ステータスバー -->
<div class="h-[20px] bg-[#f0f0f0] border-t border-[#cfe0ee] border-b border-b-[#0a12f2] flex text-[15px] leading-[18px] font-bold text-[#111] font-['Liberation_Sans','Noto_Sans_CJK_JP',sans-serif]">
  <div class="w-[533px] border-r border-[#d8d8d8]"></div>
  <div class="w-[205px] border-r border-[#d8d8d8] pl-[12px] whitespace-nowrap">2015.01.06 09:20 (火曜日)</div>
  <div class="w-[123px] border-r border-[#d8d8d8]"></div>
  <div class="w-[76px] border-r border-[#d8d8d8]"></div>
  <div class="w-[76px] border-r border-[#d8d8d8]"></div>
  <div class="w-[76px] border-r border-[#d8d8d8]"></div>
  <div class="w-[76px] border-r border-[#d8d8d8]"></div>
  <div class="w-[76px]"></div>
</div>

<script>
  // 座標はスクリーンショットを 3 倍した値で書いている
  function chart(id, ox, oy) {
    const X = v => Math.round(ox + v / 2.875) + .5
    const Y = v => Math.round(oy + v / 3) + .5
    let s = ''
    const api = {
      X, Y,
      line(pts, color, w = 1, dash = '') {
        const p = pts.trim().split(/\s+/).map(q => { const [a, b] = q.split(','); return X(+a) + ',' + Y(+b) }).join(' ')
        s += `<polyline points="${p}" fill="none" stroke="${color}" stroke-width="${w}" ${dash ? `stroke-dasharray="${dash}"` : ''}/>`
      },
      rect(x1, y1, x2, y2, fill, stroke = 'none') {
        s += `<rect x="${X(x1)}" y="${Y(y1)}" width="${X(x2) - X(x1)}" height="${Y(y2) - Y(y1)}" fill="${fill}" stroke="${stroke}"/>`
      },
      text(x, y, str, fill = '#fff', size = 11) {
        s += `<text x="${X(x)}" y="${Y(y) + 3}" fill="${fill}" font-size="${size}" shape-rendering="auto">${str}</text>`
      },
      grid(xs, ys, l, r, t, b) {
        xs.forEach(x => api.line(`${x},${t} ${x},${b}`, '#2b2b66', 1, '4 3'))
        ys.forEach(y => api.line(`${l},${y} ${r},${y}`, '#2b2b66', 1, '4 3'))
      },
      frame(l, r, t, b) { api.rect(l, t, r, b, 'none', '#fff') },
      candles(x0, data) {
        data.forEach((c, i) => {
          const x = x0 + 23 * i
          api.line(`${x},${c[0]} ${x},${c[1]}`, '#00ff00')
          s += `<rect x="${X(x) - 2}" y="${Y(c[2])}" width="4" height="${Math.max(Y(c[3]) - Y(c[2]), 1)}" fill="${c[4] ? '#fff' : '#000'}" stroke="#00ff00"/>`
        })
      },
      done() { document.getElementById(id).innerHTML = s }
    }
    return api
  }

  const timeX = [50, 142, 235, 326, 349, 418, 510, 602, 694, 786, 878, 902, 971, 1063, 1155, 1247, 1339]
  const dates = [[50, '2 1 2015'], [235, '2 1 17:00'], [418, '5 1 03:00'], [602, '5 1 11:00'], [786, '5 1 19:00'], [971, '6 1 03:00']]

  // --- EURUSD ---
  {
    const c = chart('eur', 225, 105)
    c.grid(timeX, [145, 253, 364, 472, 580, 689], 38, 1403, 112, 760)
    c.frame(38, 1403, 112, 760)
    const upper = [[485,163],[580,167],[602,182],[720,182],[740,195],[763,217],[810,217],[830,225],[902,225],[915,270],[925,322],[1040,322],[1062,331],[1155,331],[1180,347],[1224,382],[1385,382]]
    const lower = [[602,182],[648,202],[718,202],[763,238],[810,238],[832,253],[902,255],[915,300],[925,365],[995,370],[1040,405],[1085,412],[1108,438],[1155,438],[1224,495],[1280,495],[1340,522],[1385,538]]
    const at = (pts, x) => {
      for (let i = 1; i < pts.length; i++) if (x <= pts[i][0]) {
        const [a, b] = [pts[i - 1], pts[i]]
        return a[1] + (b[1] - a[1]) * (x - a[0]) / (b[0] - a[0])
      }
      return pts[pts.length - 1][1]
    }
    for (let x = 602; x <= 1385; x += 23) c.line(`${x},${at(upper, x)} ${x},${at(lower, x)}`, '#9999ff')
    c.line(upper.map(p => p.join()).join(' '), '#a6a6ff')
    c.line(lower.map(p => p.join()).join(' '), '#ffb080')
    c.line('38,550 1403,550', '#3a3a90')
    c.line('50,605 70,558 96,558 119,590 142,568 188,532 211,528 235,550 260,550 303,530 350,510 372,522 418,482 441,472 465,515 487,520 510,548', '#0a7a0a')
    c.line('50,181 120,181 140,195 165,217 235,223 303,225 315,260 326,322 395,322 418,345 440,362 460,373 555,373 580,385 600,405 625,440 695,440 740,475 785,478 808,498 855,498 885,520 902,550 1108,552', '#0000ff')
    c.candles(50, [
      [205,263,212,235,0],[205,248,212,227,1],[215,248,222,232,0],[215,268,220,265,1],[250,296,265,280,1],[278,340,281,328,1],[282,335,288,326,0],[280,343,292,338,1],
      [325,355,338,348,1],[328,352,334,349,0],[333,352,338,351,1],[343,362,352,358,1],[497,553,500,517,1],[435,517,487,513,0],[441,497,487,492,1],[465,492,481,488,1],
      [482,517,485,513,1],[483,540,514,526,1],[517,568,526,541,1],[510,557,515,541,0],[475,530,484,510,0],[435,500,484,489,1],[475,505,488,500,1],[485,595,497,576,1],
      [570,638,580,628,1],[588,670,628,637,1],[565,660,601,637,0],[545,617,555,600,0],[530,603,558,560,0],[545,597,562,590,1],[565,605,570,592,0],[545,600,557,571,0],
      [535,555,536,552,0],[507,543,530,535,0],[525,555,530,549,1],[545,568,552,554,0],[530,555,541,551,0],[522,555,530,541,0],[515,542,523,526,0],[492,530,511,526,0],
      [505,530,511,521,1],[500,530,503,521,0],[480,510,485,505,0],[463,485,472,484,0],[470,518,473,516,1],[498,578,518,523,1],[512,552,521,550,1]
    ])
    c.line('50,223 120,225 140,240 165,262 210,262 235,282 303,285 315,330 326,403 350,415 395,417 418,438 440,438 490,458 510,502 555,502 580,518 625,552 715,552 740,570 763,580 786,600 832,582 855,560 878,555 925,555', '#ff0000')
    c.line('925,552 945,550 970,530 1000,527 1040,510 1060,510 1085,520 1108,522', '#ff0000')
    c.text(48, 141, 'EURUSD、H1、セル: 40、スケール: 100 %', '#fff', 10.8)
    dates.forEach(([x, t]) => { c.line(`${x},760 ${x},770`, '#fff'); c.text(x, 790, t, '#fff', 9.5) })
    ;[['1.2080',145],['1.2040',253],['1.2000',364],['1.1960',472],['1.1920',580],['1.1880',689]].forEach(([t, y]) => { c.line(`1403,${y} 1414,${y}`, '#fff'); c.text(1420, y, t) })
    c.rect(1417, 403, 1515, 443, '#9999ff'); c.line('1403,423 1417,423', '#9999ff'); c.text(1420, 423, '1.1977', '#202070')
    c.rect(1417, 497, 1515, 520, '#ff0000'); c.text(1420, 512, '1.1943', '#000')
    c.line('1403,520 1417,520', '#ff0000'); c.line('1403,538 1417,538', '#ffb080')
    c.rect(1417, 517, 1515, 532, '#ffb080')
    c.rect(1417, 530, 1515, 568, '#fff'); c.text(1420, 549, '1.1931', '#000')
    c.rect(1417, 568, 1515, 571, '#0000ff'); c.line('1403,552 1417,552', '#0000ff')
    c.done()
  }

  // --- Profit ---
  {
    const c = chart('profit', 770, 105)
    const xs = [41,133,225,317,409,501,593,685,777,869,961,1053,1145,1237,1329]
    const ys = [202,319,437,556,673]
    c.grid(xs, ys, 36, 1400, 112, 760)
    c.frame(36, 1400, 112, 760)
    c.line('40,202 255,202', '#00ff00', 1, '2 1')
    c.line('40,673 252,673', '#800000')
    ;[[50,'#800080','残高',85],[185,'#00ff00','有効証拠金',220],[423,'#808080','証拠金',458],[593,'#800000','ドローダウン',627]].forEach(([x, col, t, tx]) => {
      c.rect(x, 133, x + 28, 161, col, '#fff'); c.text(tx, 147, t, '#fff', 12)
    })
    ;[['10000',202],['7500',319],['5000',437],['2500',556],['0',673]].forEach(([t, y]) => { c.line(`1400,${y} 1411,${y}`, '#fff'); c.text(1417, y, t) })
    ;[[41,'6 1 2015'],[225,'6 1 08:00']].forEach(([x, t]) => { c.line(`${x},760 ${x},770`, '#fff'); c.text(x, 790, t, '#fff', 9.5) })
    c.done()
  }

  // --- GBPUSD + MACD ---
  {
    const c = chart('gbp', 225, 388)
    c.grid(timeX, [148, 243, 342, 441], 38, 1403, 105, 535)
    c.grid(timeX, [583], 38, 1403, 545, 753)
    c.frame(38, 1403, 105, 535)
    c.frame(38, 1403, 545, 753)
    c.line('38,427 1403,427', '#3a3a90')
    c.candles(50, [
      [195,238,198,236,1],[235,270,236,268,1],[258,278,265,272,1],[267,288,272,280,1],[270,288,280,287,1],[285,306,287,304,1],[292,309,303,308,1],[303,333,305,331,1],
      [328,333,328,332,1],[332,338,334,336,1],[333,350,335,346,1],[343,358,346,349,1],[380,402,388,398,0],[365,390,370,388,0],[360,376,368,373,1],[372,385,374,383,1],
      [380,390,382,385,1],[380,390,383,385,1],[383,392,385,387,1],[384,393,385,392,1],[377,393,379,391,0],[362,383,372,379,0],[365,387,369,373,1],[369,399,371,397,1],
      [395,414,400,407,1],[406,445,408,442,1],[424,443,438,442,1],[428,449,430,443,0],[420,434,424,430,0],[420,429,423,425,1],[420,432,425,430,1],[416,434,419,431,0],
      [405,421,409,419,0],[400,413,405,410,1],[405,414,407,412,1],[410,417,411,413,1],[405,414,407,412,1],[400,412,403,409,0],[398,408,402,406,1],[397,408,401,406,1],
      [397,408,401,406,1],[403,411,406,408,1],[403,411,406,408,1],[402,408,403,407,1],[404,426,406,424,1],[418,440,419,426,0],[414,430,419,427,1]
    ])
    // MACD ヒストグラム: [i, 上端, 下端]
    ;[[0,583,600],[1,583,612],[2,583,606],[3,583,594],[4,583,588],[5,583,591],[7,583,587],[12,583,590],[14,578,583],[15,573,583],[16,570,583],[17,574,583],[18,574,583],[19,576,583],[20,571,583],[21,563,583],[22,568,583],[24,583,591],[25,583,602],[26,583,596],[28,573,583],[29,571,583],[30,573,583],[31,570,583],[32,567,583],[33,567,583],[34,573,583],[35,580,583],[36,576,583],[37,576,583],[38,578,583],[39,578,583],[40,578,583],[41,581,583],[42,581,583],[43,581,583],[44,583,590],[45,583,588],[46,583,587]].forEach(([i, t, b]) => {
      const x = 50 + 23 * i
      c.rect(x - 7, t, x + 7, b, '#b4b4b4')
    })
    c.line('50,635 75,680 115,703 140,706 165,717 210,730 235,730 280,725 300,718 326,733 350,722 395,708 440,690 495,673 555,628 600,645 625,670 650,682 700,660 740,648 790,612 815,600 850,595 900,583 950,577 1030,577 1060,590 1090,596 1108,606', '#0000ff')
    c.line('50,625 80,658 120,692 165,712 215,725 260,728 326,725 390,715 440,700 490,680 530,655 575,635 605,635 650,672 695,675 760,640 790,625 815,605 860,598 900,587 950,578 1040,578 1060,587 1090,592 1108,600', '#ff0000', 1, '3 2')
    c.text(48, 135, 'GBPUSD、H1、セル: 130、スケール: 100 %', '#fff', 10.8)
    c.text(44, 568, 'MACD new (5, 13, 3, Close)', '#d8d8d8')
    dates.forEach(([x, t]) => { c.line(`${x},753 ${x},763`, '#fff'); c.text(x, 785, t, '#fff', 9.5) })
    ;[['1.5600',148],['1.5470',243],['1.5340',342],['1.5210',441]].forEach(([t, y]) => { c.line(`1403,${y} 1414,${y}`, '#fff'); c.text(1420, y, t) })
    c.rect(1417, 406, 1515, 447, '#fff'); c.line('1403,427 1417,427', '#fff'); c.text(1420, 427, '1.5228', '#000')
    c.text(1420, 565, '0.0012')
    c.line('1403,550 1410,550', '#fff'); c.line('1403,750 1410,750', '#fff')
    c.rect(1417, 567, 1527, 609, '#c0c0c0'); c.text(1420, 587, '-0.0002', '#000')
    c.rect(1417, 609, 1527, 617, '#ff0000'); c.rect(1417, 617, 1527, 623, '#0000ff')
    c.line('1403,596 1417,596', '#ff0000'); c.line('1403,604 1417,604', '#0000ff')
    c.text(1418, 730, '-0.0060')
    c.done()
  }

  // --- USDJPY ---
  {
    const c = chart('usd', 770, 388)
    c.grid([47,139,231,254,323,415,507,599,691,783,875,967,1059,1151,1243,1335], [205,310,412,517,620,723], 36, 1397, 105, 753)
    c.frame(36, 1397, 105, 753)
    c.line('36,547 1397,547', '#3a3a90')
    c.candles(47, [
      [196,224,196,218,0],[196,215,197,206,0],[203,234,206,232,1],[230,392,232,382,1],[340,388,373,376,1],[328,376,338,367,0],[310,372,332,360,1],[305,362,317,361,0],
      [275,318,302,314,0],[262,340,290,305,0],[262,292,284,289,1],[282,347,290,346,1],[325,430,352,417,1],[370,445,377,412,0],[340,390,341,376,0],[338,392,338,361,1],
      [313,362,316,362,0],[295,358,320,355,1],[345,400,361,397,1],[377,440,383,397,0],[345,395,361,389,0],[348,395,355,367,1],[358,390,368,373,1],[334,378,354,361,0],
      [337,382,355,367,1],[365,460,367,460,1],[425,483,455,455,0],[420,467,433,460,0],[405,440,409,440,0],[402,425,413,424,1],[425,460,432,460,1],[453,535,467,532,1],
      [485,582,527,553,1],[515,595,533,547,0],[510,555,525,525,0],[525,665,527,662,1],[618,670,640,660,0],[590,640,610,640,0],[536,605,538,604,0],[490,560,508,544,0],
      [448,525,470,510,0],[405,467,455,467,0],[412,467,447,452,1],[438,587,453,558,1],[555,653,560,560,0],[565,645,568,601,1],[545,603,547,595,0]
    ])
    c.line('47,205 93,212 130,235 185,257 230,266 277,268 300,280 346,303 415,325 461,345 530,347 576,350 640,380 714,383 760,405 806,432 830,437 875,473 921,497 967,513 1013,510 1060,533 1105,547', '#ffff00')
    c.line('47,204 93,206 116,216 185,224 277,231 370,260 415,263 530,298 622,314 714,340 783,375 875,413 967,437 1013,448 1105,468', '#ff0000', 3)
    c.line('252,607 278,607 346,445', '#ff0000'); c.rect(133, 583, 252, 632, '#000', '#ff0000'); c.text(138, 607, '119.14', '#ff0000', 12)
    c.line('711,733 738,733 806,595', '#ff0000'); c.rect(593, 708, 711, 753, '#000', '#ff0000'); c.text(598, 733, '118.85', '#ff0000', 12)
    c.line('930,455 945,465 955,462 945,452 930,455 945,490', '#a00000', 2)
    c.text(46, 135, 'USDJPY、M15、セル: 20、スケール: 100 %', '#fff', 10.8)
    ;[[47,'5 1 2015'],[231,'5 1 23:45'],[415,'6 1 01:45'],[599,'6 1 03:45'],[783,'6 1 05:45'],[967,'6 1 07:45']].forEach(([x, t]) => { c.line(`${x},753 ${x},763`, '#fff'); c.text(x, 785, t, '#fff', 9.5) })
    ;[['119.60',205],['119.40',310],['119.20',412],['119.00',517],['118.80',620],['118.60',723]].forEach(([t, y]) => { c.line(`1397,${y} 1408,${y}`, '#fff'); c.text(1414, y, t) })
    c.rect(1410, 448, 1510, 488, '#ff0000'); c.line('1397,468 1410,468', '#ff0000'); c.text(1414, 468, '119.09', '#200000')
    c.rect(1410, 527, 1510, 567, '#fff'); c.line('1397,547 1410,547', '#fff'); c.text(1414, 547, '118.94', '#000')
    c.done()
  }
</script>
</body>
</html>
